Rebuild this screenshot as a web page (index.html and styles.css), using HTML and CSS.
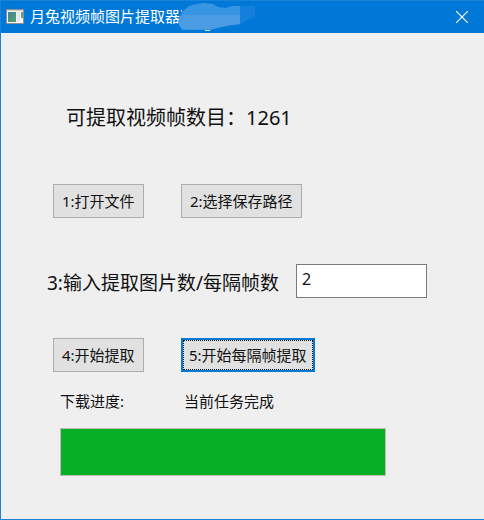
FILE: index.html
```html
<!DOCTYPE html>
<html lang="zh-CN">
<head>
  <meta charset="UTF-8">
  <meta name="viewport" content="width=device-width, initial-scale=1.0">
  <title>月兔视频帧图片提取器</title>
  <link rel="stylesheet" href="styles.css">
</head>
<body>

  <div class="window">
    <header class="titleBar">
      <svg class="appIcon" width="18" height="15" viewBox="0 0 18 15" aria-hidden="true">
        <defs>
          <linearGradient id="screen" x1="0" y1="0" x2="1" y2="1">
            <stop offset="0" stop-color="#4a7fa5"/>
            <stop offset="1" stop-color="#4fa562"/>
          </linearGradient>
        </defs>
        <rect x="0" y="0" width="18" height="15" fill="#8d8f91"/>
        <rect x="1" y="1" width="16" height="13" fill="#f4f4f4"/>
        <rect x="1" y="1" width="16" height="1" fill="#c9cccf"/>
        <rect x="2" y="3" width="8" height="10" fill="url(#screen)"/>
        <rect x="11" y="3" width="3" height="10" fill="#e4e8ee"/>
        <rect x="15" y="3" width="2" height="6" fill="#5ba588"/>
      </svg>
      <h1 class="title">月兔视频帧图片提取器</h1>
      <svg class="smudge" width="78" height="28" viewBox="0 0 78 28" aria-hidden="true">
        <path d="M48 4L64 3L76 3V14L70 16L62 21L48 23Z" fill="#1480db"/>
        <path d="M0 15L4 8L10 3L17 1L25 0L34 1L39 4L47 5L53 3L61 3V21L52 22L42 24L32 27H3L0 22Z" fill="#3795e1"/>
        <path d="M5 12H61V21L52 22L42 24L32 26H3L0 22V15Z" fill="#4b9de3"/>
        <rect x="26" y="27" width="5" height="1" fill="#d9e9f8"/>
        <rect x="2" y="7" width="1" height="2" fill="#b9d8f3"/>
      </svg>
      <button type="button" class="closeButton" aria-label="关闭">
        <svg width="12" height="12" viewBox="0 0 12 12" aria-hidden="true">
          <path d="M0 0L12 12M12 0L0 12" stroke="#fff" stroke-width="1.2" fill="none"/>
        </svg>
      </button>
    </header>

    <form class="content">
      <p class="frameCount">可提取视频帧数目：<span id="frameCount">1261</span></p>

      <div class="buttonRow">
        <button type="button" class="button">1:打开文件</button>
        <button type="button" class="button">2:选择保存路径</button>
      </div>

      <div class="inputRow">
        <label for="frameStep">3:输入提取图片数/每隔帧数</label>
        <input type="text" id="frameStep" value="2">
      </div>

      <div class="buttonRow">
        <button type="button" class="button">4:开始提取</button>
        <button type="button" class="button activeButton">5:开始每隔帧提取</button>
      </div>

      <div class="statusRow">
        <label for="progress">下载进度:</label>
        <output>当前任务完成</output>
      </div>

      <progress id="progress" class="progress" value="100" max="100"></progress>
    </form>
  </div>

</body>
</html>
```

FILE: styles.css
```css
* {
  box-sizing: border-box;
}

body {
  margin: 0;
  font-family: "Noto Sans", "Noto Sans CJK SC", sans-serif;
  font-size: 15px;
  line-height: 20px;
  color: #111;
  background-color: #efefef;
}

.window {
  min-height: 100vh;
  border: 1px solid #1883d7;
  border-right: none;
}

.titleBar {
  display: flex;
  align-items: center;
  height: 32px;
  padding: 0 0 2px 5px;
  background-color: #0078d7;
  color: #fff;
}

.title {
  margin: 0 0 0 6px;
  font-size: 15px;
  font-weight: normal;
}

.smudge {
  align-self: flex-end;
  margin-left: -1px;
}

.closeButton {
  display: flex;
  align-items: center;
  justify-content: center;
  align-self: flex-start;
  width: 44px;
  height: 32px;
  margin-left: auto;
  padding: 0;
  border: none;
  background: none;
  cursor: pointer;
}

.closeButton:hover {
  background-color: #e81123;
}

.content {
  padding: 71px 57px 43px 52px;
}

.frameCount {
  margin: 0 0 52px 13px;
  font-size: 20px;
  line-height: 28px;
}

.buttonRow {
  display: grid;
  grid-template-columns: 128px 1fr;
  justify-items: start;
}

.button {
  height: 34px;
  padding: 0 8px;
  border: 1px solid #adadad;
  background-color: #e1e1e1;
  color: #111;
  font: inherit;
  white-space: nowrap;
  cursor: pointer;
}

.button:hover {
  border-color: #0078d7;
  background-color: #e5f1fb;
}

.activeButton {
  padding: 0 6px;
  border: 2px solid #0078d7;
  outline: 1px dotted #111;
  outline-offset: -3px;
}

.inputRow {
  display: flex;
  align-items: center;
  justify-content: space-between;
  margin: 46px 0 40px -6px;
}

.inputRow label {
  padding-top: 4px;
  font-size: 19px;
  line-height: 28px;
  white-space: nowrap;
}

.inputRow input {
  width: 131px;
  height: 34px;
  padding: 0 5px 4px;
  border: 1px solid #7a7a7a;
  border-radius: 0;
  background-color: #fff;
  color: #111;
  font: inherit;
  font-size: 16px;
}

.statusRow {
  display: grid;
  grid-template-columns: 124px 1fr;
  margin: 19px 0 17px 7px;
}

.progress {
  display: block;
  width: calc(100% - 48px);
  height: 48px;
  margin-left: 7px;
  border: 1px solid #bcbcbc;
  background-color: #e6e6e6;
  appearance: none;
}

.progress::-webkit-progress-bar {
  background-color: #e6e6e6;
}

.progress::-webkit-progress-value {
  background-color: #06b025;
}

.progress::-moz-progress-bar {
  background-color: #06b025;
}
```
